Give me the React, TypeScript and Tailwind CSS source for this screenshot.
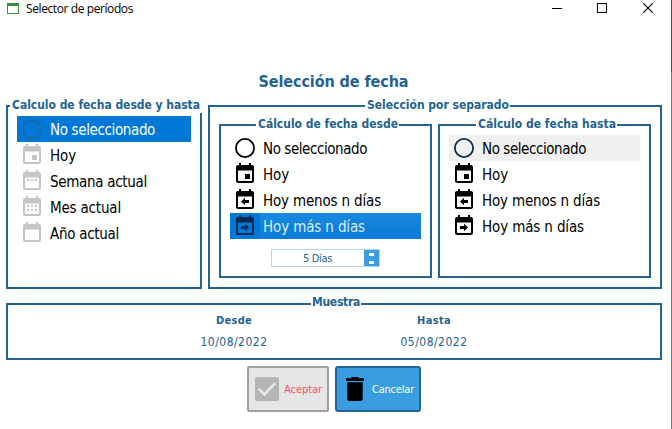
import { useLayoutEffect, useRef, useState } from "react";
import type { ReactNode } from "react";

/* Text that spreads its letter spacing over a given width. */
function Fit({ text, width, className = "" }: { text: string; width: number; className?: string }) {
  const ref = useRef<HTMLSpanElement>(null);
  const [spacing, setSpacing] = useState(0);
  useLayoutEffect(() => {
    if (!ref.current) return;
    const natural = ref.current.getBoundingClientRect().width - spacing * text.length;
    setSpacing((width - natural) / text.length);
  }, [text, width]);
  return (
    <span ref={ref} className={`inline-block whitespace-nowrap ${className}`} style={{ letterSpacing: spacing }}>
      {text}
    </span>
  );
}

type IconKind = "circle" | "today" | "week" | "month" | "year" | "minus" | "plus";

const marks: Record<IconKind, string> = {
  circle: "",
  today: "M12 12h5v5h-5z",
  week: "M7 10h2v2H7zM11 10h2v2h-2zM15 10h2v2h-2z",
  month: "M7 10h2v2H7zM11 10h2v2h-2zM15 10h2v2h-2zM7 14h2v2H7zM11 14h2v2h-2zM15 14h2v2h-2z",
  year: "",
  minus: "M8 13.5l4-3.8v2.3h4v3h-4v2.3z",
  plus: "M16 13.5l-4-3.8v2.3H8v3h4v2.3z",
};

function ItemIcon({ kind, className }: { kind: IconKind; className: string }) {
  return (
    <svg viewBox="0 0 24 24" className={`size-6 shrink-0 fill-current ${className}`}>
      {kind === "circle" ? (
        <circle cx="12" cy="12" r="9.1" fill="none" stroke="currentColor" strokeWidth="1.8" />
      ) : (
        <>
          <path d="M19 3h-1V1h-2v2H8V1H6v2H5c-1.1 0-2 .9-2 2v14c0 1.1.9 2 2 2h14c1.1 0 2-.9 2-2V5c0-1.1-.9-2-2-2zm0 16H5V8.5h14V19z" />
          <path d={marks[kind]} />
        </>
      )}
    </svg>
  );
}

interface Item {
  kind: IconKind;
  text: string;
  width: number;
  row?: string;
  icon?: string;
}

function List({ items }: { items: Item[] }) {
  return (
    <ul>
      {items.map((i) => (
        <li key={i.text} className={`flex h-[26px] items-center gap-1.5 pl-[3px] text-[15px] leading-6 ${i.row ?? "text-black"}`}>
          <ItemIcon kind={i.kind} className={i.icon ?? "text-black"} />
          <Fit text={i.text} width={i.width} className="pt-[2px]" />
        </li>
      ))}
    </ul>
  );
}

function Group({ title, width, legend, className, children }: { title: string; width: number; legend: string; className: string; children?: ReactNode }) {
  return (
    <section className={`relative border-2 border-[#236391] ${className}`}>
      <h2 className={`absolute bg-white text-[12px] leading-[14px] font-bold text-[#236391] ${legend}`}>
        <Fit text={title} width={width} className="align-top" />
      </h2>
      {children}
    </section>
  );
}

const rangeItems: Item[] = [
  { kind: "circle", text: "No seleccionado", width: 105, row: "bg-[#0078d7] text-white", icon: "text-[#1c68a6]" },
  { kind: "today", text: "Hoy", width: 26, icon: "text-[#c4c4c4]" },
  { kind: "week", text: "Semana actual", width: 97, icon: "text-[#c4c4c4]" },
  { kind: "month", text: "Mes actual", width: 71, icon: "text-[#c4c4c4]" },
  { kind: "year", text: "Año actual", width: 69, icon: "text-[#c4c4c4]" },
];

const fromItems: Item[] = [
  { kind: "circle", text: "No seleccionado", width: 104 },
  { kind: "today", text: "Hoy", width: 26 },
  { kind: "minus", text: "Hoy menos n días", width: 118 },
  {
    kind: "plus",
    text: "Hoy más n días",
    width: 102,
    row: "bg-[linear-gradient(to_right,#0078d7_30px,transparent_30px),linear-gradient(#1a88e0,#087cd8)] text-[#d9efff]",
    icon: "text-[#03294c]",
  },
];

const toItems: Item[] = [
  { kind: "circle", text: "No seleccionado", width: 104, row: "bg-[#f0f0f0] text-black", icon: "text-[#0b2b48]" },
  { kind: "today", text: "Hoy", width: 26 },
  { kind: "minus", text: "Hoy menos n días", width: 118 },
  { kind: "plus", text: "Hoy más n días", width: 102 },
];

export default function App() {
  return (
    <div className="flex h-[429px] w-[672px] overflow-hidden bg-white font-['DejaVu_Sans_Condensed','DejaVu_Sans',sans-serif] text-[#236391]">
      <div className="flex w-[671px] flex-col">
        <header className="flex h-[18px] items-center font-['Open_Sans',sans-serif] text-[12px] leading-[18px] text-black">
          <svg viewBox="0 0 12 11" className="mb-px ml-[7px] h-[11px] w-3" shapeRendering="crispEdges">
            <path d="M0 0h12v11H0zM1 3v7h10V3z" fill="#388e3c" fillRule="evenodd" />
          </svg>
          <Fit text="Selector de períodos" width={107} className="ml-[7px]" />
          <svg viewBox="0 0 104 12" className="mr-[17px] mb-[2px] ml-auto h-3 w-[104px]" fill="none" stroke="#000">
            <path d="M2 6.5h10M47.5 1.5h9v9h-9z" shapeRendering="crispEdges" />
            <path d="M93.2 1.2l9.6 9.6M102.8 1.2l-9.6 9.6" strokeWidth="1.1" />
          </svg>
        </header>

        <h1 className="mt-[53px] flex h-[22px] justify-center pr-[4px] text-[16px] leading-[22px] font-bold">
          <Fit text="Selección de fecha" width={150} />
        </h1>

        <main className="mt-3 flex gap-1.5 pl-1.5">
          <Group title="Calculo de fecha desde y hasta" width={188} legend="-top-[9px] left-[2px] h-[15px] pl-[2px] -right-[2px]" className="h-[184px] w-[196px] pt-[9px] pr-[9px] pl-[9px]">
            <List items={rangeItems} />
          </Group>
          <Group title="Selección por separado" width={142} legend="-top-[9px] left-[155px] w-[145px] pl-[2px]" className="flex h-[184px] w-[454px] gap-1.5 pt-[17px] pl-[9px]">
            <Group title="Cálculo de fecha desde" width={140} legend="-top-[9px] left-[35px] w-[143px] pl-[2px]" className="h-[154px] w-[213px] px-[9px] pt-[9px]">
              <List items={fromItems} />
              <div className="mt-[10px] ml-[41px] flex h-[18px] w-[109px] border border-[#b9d5ea]">
                <div className="flex-1 pl-[31px] text-[11px] leading-[18px]">
                  <Fit text="5 Días" width={29} className="align-top" />
                </div>
                <div className="flex w-[15px] flex-col items-center gap-[5px] bg-[#3a9de1] pt-[3px]">
                  <span className="h-[3px] w-[5px] bg-white" />
                  <span className="h-[3px] w-[5px] bg-white" />
                </div>
              </div>
            </Group>
            <Group title="Cálculo de fecha hasta" width={138} legend="-top-[9px] left-[36px] w-[141px] pl-[2px]" className="h-[154px] w-[213px] px-[9px] pt-[9px]">
              <List items={toItems} />
            </Group>
          </Group>
        </main>

        <Group title="Muestra" width={48} legend="-top-[10px] left-[303px] w-[50px] pl-px" className="mt-[14px] ml-1.5 flex h-[57px] w-[656px] pl-[126px] text-[12px]">
          <div className="mt-[9px] flex w-[200px] flex-col items-center">
            <Fit text="Desde" width={36} className="text-[11px] leading-[14px] font-bold" />
            <Fit text="10/08/2022" width={67} className="mt-[6px] leading-[16px]" />
          </div>
          <div className="mt-[9px] flex w-[200px] flex-col items-center">
            <Fit text="Hasta" width={34} className="text-[11px] leading-[14px] font-bold" />
            <Fit text="05/08/2022" width={67} className="mt-[6px] leading-[16px]" />
          </div>
        </Group>

        <footer className="mt-1.5 ml-[247px] flex gap-1.5 text-[11px]">
          <button className="flex h-[46px] w-[82px] items-center rounded-[2px] border-2 border-[#9f9f9f] bg-[#e6e6e6] pl-[6px] text-[#f5536b]">
            <svg viewBox="0 0 24 24" className="size-6">
              <rect width="24" height="24" rx="2.6" fill="#b5b5b5" />
              <path d="M3.7 11.8l5.6 5.6L20.3 6.2" fill="none" stroke="#e9e9e9" strokeWidth="2.6" />
            </svg>
            <Fit text="Aceptar" width={38} className="mt-[3px] ml-[5px]" />
          </button>
          <button className="flex h-[46px] w-[86px] items-center rounded-[3px] border-2 border-[#236391] bg-[#3a9de1] pl-[9px] text-white">
            <svg viewBox="0 0 18 24" className="h-6 w-[18px]">
              <path d="M0 1.3h4.6L5.9 0h6.2l1.3 1.3H18v2.6H0zM1.3 5.2h15.4v16.1a2.6 2.6 0 0 1-2.6 2.7H3.9a2.6 2.6 0 0 1-2.6-2.7z" />
            </svg>
            <Fit text="Cancelar" width={42} className="mt-[3px] ml-[8px]" />
          </button>
        </footer>
      </div>
      <div className="flex w-px flex-col bg-[#777777]">
        <span className="h-[72px] bg-[#2f566e]" />
      </div>
    </div>
  );
}
